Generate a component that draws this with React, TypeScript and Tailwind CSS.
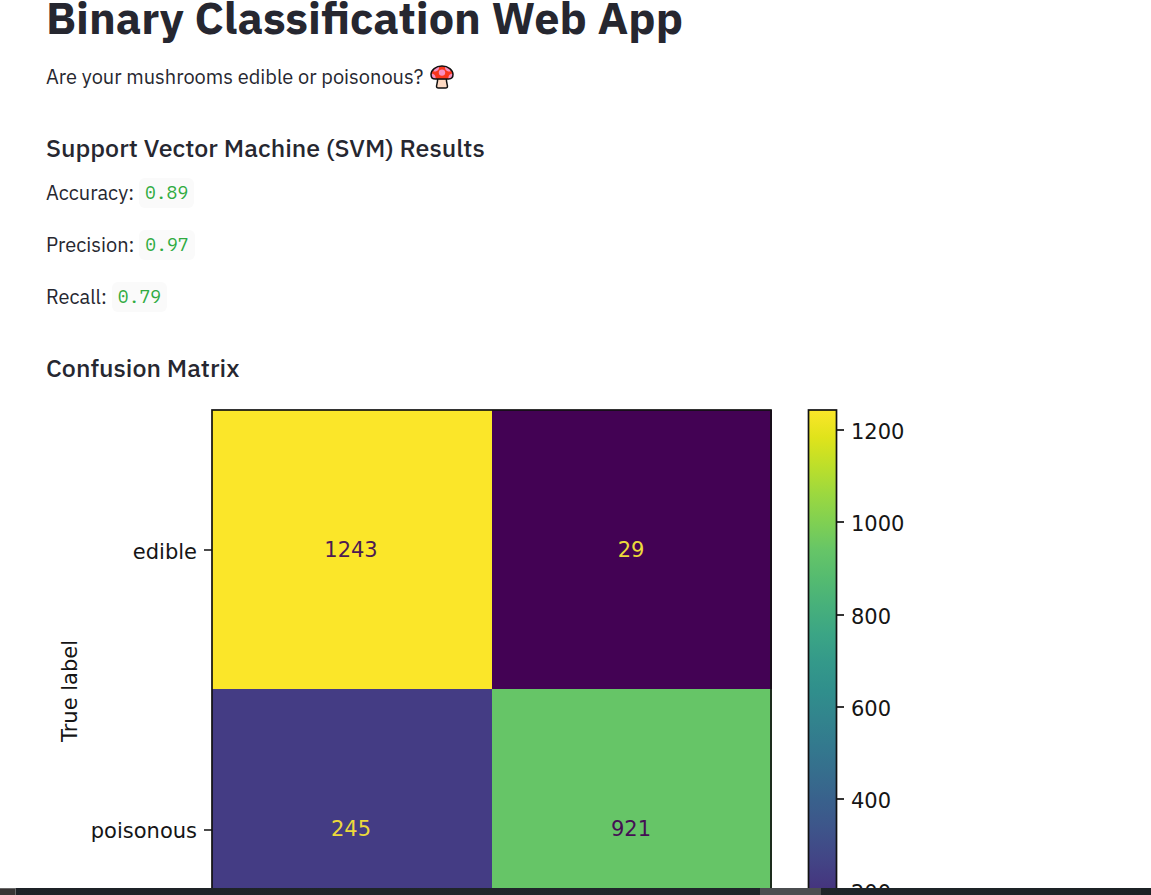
import React from 'react';

const metrics = [
  { name: 'Accuracy', value: '0.89' },
  { name: 'Precision', value: '0.97' },
  { name: 'Recall', value: '0.79' },
];

const viridis = [
  '#fbe629', '#dfe31b', '#bddf2a', '#9cd83f', '#80d052', '#66c567', '#55bb70', '#47b07b', '#3ba585', '#34998a', '#308f8c',
  '#32848d', '#33798e', '#366d8d', '#39608c', '#3e548a', '#424686', '#45367f', '#462775', '#461565', '#430254',
];

const cells = [
  { x: 165, y: 10, value: '1243', fill: '#fbe629', ink: '#4d1a52' },
  { x: 445, y: 10, value: '29', fill: '#430254', ink: '#ecd93b' },
  { x: 165, y: 289, value: '245', fill: '#443c84', ink: '#ecd93b' },
  { x: 445, y: 289, value: '921', fill: '#66c567', ink: '#440f54' },
];

const colorTicks = [
  { y: 30, label: '1200' },
  { y: 122, label: '1000' },
  { y: 215, label: '800' },
  { y: 307, label: '600' },
  { y: 399, label: '400' },
  { y: 491, label: '200' },
];

function Mushroom() {
  return (
    <svg viewBox="0 0 24 24" role="img" aria-label="mushroom" className="size-6">
      <path d="M7.6 13.5C7.8 16 7.2 18 6.6 20.6C6.3 22.3 7.1 23 8.5 23H15.5C16.9 23 17.7 22.3 17.4 20.6C16.8 18 16.2 16 16.4 13.5Z" fill="#ffdbc4" stroke="#111" strokeWidth="1.5" />
      <path d="M1 9.6C1 4.8 5.8 1.1 12 1.1S23 4.8 23 9.6C23 13 21.3 14 18.8 14H5.2C2.7 14 1 13 1 9.6Z" fill="#f9371c" />
      <g fill="#f78fc0">
        <circle cx="12" cy="7.6" r="3.2" />
        <path d="M3.2 6C4.6 3.5 6.8 2.1 9 1.6C9.4 4 8 6 5.8 6.4C4.8 6.6 3.9 6.5 3.2 6Z" />
        <path d="M20.8 6C19.4 3.5 17.2 2.1 15 1.6C14.6 4 16 6 18.2 6.4C19.2 6.6 20.1 6.5 20.8 6Z" />
        <path d="M1.3 8.8C3.7 8.5 5.9 10.5 5.6 13.8C2.4 13.8 1 12.5 1.3 8.8Z" />
        <path d="M22.7 8.8C20.3 8.5 18.1 10.5 18.4 13.8C21.6 13.8 23 12.5 22.7 8.8Z" />
      </g>
      <path d="M1 9.6C1 4.8 5.8 1.1 12 1.1S23 4.8 23 9.6C23 13 21.3 14 18.8 14H5.2C2.7 14 1 13 1 9.6Z" fill="none" stroke="#111" strokeWidth="1.5" />
    </svg>
  );
}

function ConfusionMatrix() {
  return (
    <svg
      viewBox="-1 0 880 650"
      role="img"
      aria-label="Confusion matrix"
      className="block w-full max-w-[880px] font-['DejaVu_Sans',sans-serif] text-[21px]"
    >
      <defs>
        <linearGradient id="viridis" x1="0" y1="0" x2="0" y2="1">
          {viridis.map((color, i) => (
            <stop key={color} offset={i / (viridis.length - 1)} stopColor={color} />
          ))}
        </linearGradient>
      </defs>
      {cells.map((cell) => (
        <g key={cell.value}>
          <rect x={cell.x} y={cell.y} width="280" height="281" fill={cell.fill} />
          <text x={cell.x + 139} y={cell.y + 147} textAnchor="middle" fill={cell.ink}>
            {cell.value}
          </text>
        </g>
      ))}
      <g fill="none" stroke="#111" strokeWidth="1.7">
        <rect x="165" y="10" width="559" height="560" />
        <path d="M157 150H165M157 430H165M305 570V578M584 570V578" />
      </g>
      <g fill="#151515">
        <text x="150" y="159" textAnchor="end">edible</text>
        <text x="150" y="438" textAnchor="end">poisonous</text>
        <text transform="translate(30 291) rotate(-90)" textAnchor="middle">True label</text>
      </g>
      <rect x="761.5" y="10" width="28" height="560" fill="url(#viridis)" stroke="#111" strokeWidth="1.7" />
      {colorTicks.map((tick) => (
        <g key={tick.label}>
          <path d={`M790 ${tick.y}H797`} stroke="#111" strokeWidth="1.7" />
          <text x="804" y={tick.y + 9} fill="#151515">{tick.label}</text>
        </g>
      ))}
    </svg>
  );
}

export default function App() {
  return (
    <div className="flex h-screen flex-col bg-white font-['IBM_Plex_Sans',Roboto,sans-serif] text-[#262730]">
      <main className="min-h-0 flex-1 overflow-hidden px-[46px]">
        <h1 className="text-[45px] leading-[34px] font-bold">Binary Classification Web App</h1>
        <p className="mt-[27px] flex items-center gap-[7px] text-[20px] leading-8">
          Are your mushrooms edible or poisonous? <Mushroom />
        </p>
        <section className="mt-10">
          <h2 className="text-[25px] leading-[30px] font-medium">Support Vector Machine (SVM) Results</h2>
          <div className="mt-[14px] flex flex-col gap-5">
            {metrics.map((metric) => (
              <p key={metric.name} className="flex items-center gap-[5px] text-[20px] leading-8">
                {metric.name}:
                <code className="rounded-md bg-[#fafafa] px-1.5 font-['IBM_Plex_Mono','Liberation_Mono',monospace] text-[18px] leading-[30px] font-normal text-[#2fab41]">
                  {metric.value}
                </code>
              </p>
            ))}
          </div>
        </section>
        <section className="mt-10">
          <h2 className="text-[25px] leading-[30px] font-medium">Confusion Matrix</h2>
          <div className="mt-[17px]">
            <ConfusionMatrix />
          </div>
        </section>
      </main>
      <footer className="flex h-[7px] shrink-0 bg-linear-to-r from-[#1d2126] via-[#20272b] to-[#1c2225]">
        <div className="w-4 border-t border-r border-[#686868] bg-[#373434]" />
        <div className="flex-[744]" />
        <div className="w-[61px] bg-[#4b4e50]" />
        <div className="flex-[330]" />
      </footer>
    </div>
  );
}
